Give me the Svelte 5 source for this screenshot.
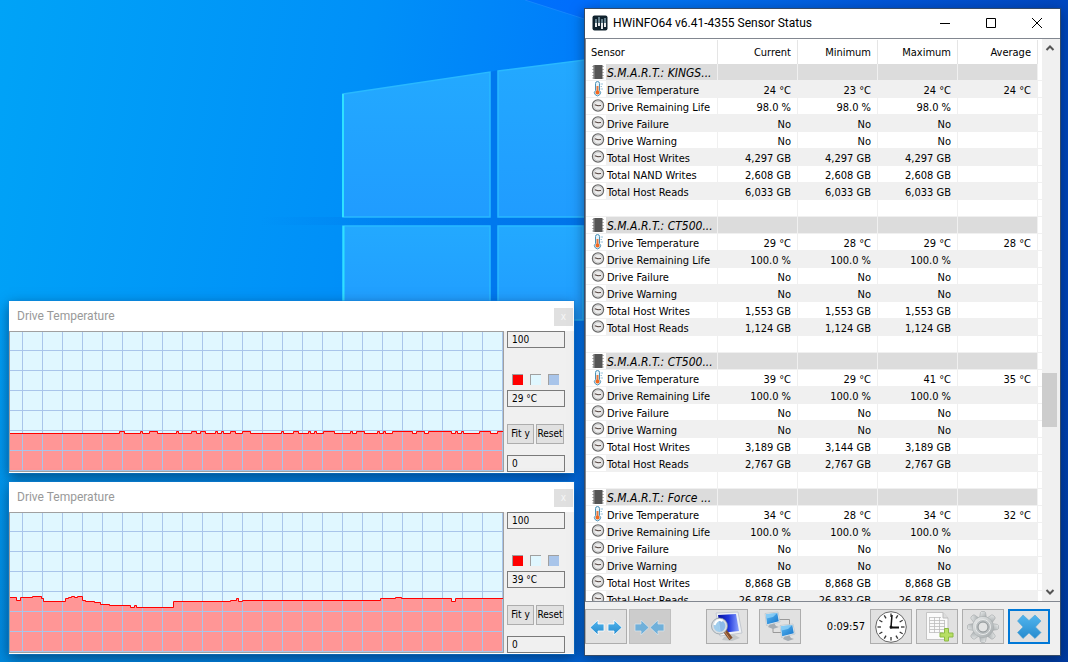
<script>
  const drive = (name, temps, life, writes, nand, reads) => [
    { kind: 'group', name, values: ['', '', '', ''] },
    { kind: 'temp', name: 'Drive Temperature', values: temps.map((t) => `${t} °C`) },
    { kind: 'gauge', name: 'Drive Remaining Life', values: [life, life, life, ''] },
    { kind: 'gauge', name: 'Drive Failure', values: ['No', 'No', 'No', ''] },
    { kind: 'gauge', name: 'Drive Warning', values: ['No', 'No', 'No', ''] },
    { kind: 'gauge', name: 'Total Host Writes', values: [...writes, ''] },
    ...(nand ? [{ kind: 'gauge', name: 'Total NAND Writes', values: [...nand, ''] }] : []),
    { kind: 'gauge', name: 'Total Host Reads', values: [...reads, ''] }
  ];
  const blank = { kind: 'blank', name: '', values: ['', '', '', ''] };
  const same = (v) => [v, v, v];

  const rows = [
    ...drive('S.M.A.R.T.: KINGS...', [24, 23, 24, 24], '98.0 %', same('4,297 GB'), same('2,608 GB'), same('6,033 GB')),
    blank,
    ...drive('S.M.A.R.T.: CT500...', [29, 28, 29, 28], '100.0 %', same('1,553 GB'), null, same('1,124 GB')),
    blank,
    ...drive('S.M.A.R.T.: CT500...', [39, 29, 41, 35], '100.0 %', ['3,189 GB', '3,144 GB', '3,189 GB'], null, same('2,767 GB')),
    blank,
    ...drive('S.M.A.R.T.: Force ...', [34, 28, 34, 32], '100.0 %', same('8,868 GB'), null, ['26,878 GB', '26,832 GB', '26,878 GB'])
  ];

  // Each step is [x where the level begins, y of the level] inside the plot.
  const bumps = [
    [110, 115], [131, 133], [140, 148], [167, 169], [182, 187], [191, 196], [206, 208], [212, 214],
    [221, 226], [233, 241], [272, 274], [284, 289], [299, 301], [305, 307], [314, 325], [341, 343],
    [347, 355], [368, 370], [374, 376], [383, 403], [407, 415], [419, 442], [446, 448], [452, 454],
    [470, 481], [488, 495]
  ];
  const flat = [[0, 102], ...bumps.flatMap(([a, b]) => [[a, 100], [b, 102]])];
  const wavy = [
    [0, 85], [7, 88], [11, 85], [23, 84], [32, 86], [34, 89], [56, 86], [59, 85], [62, 84], [65, 85],
    [68, 84], [73, 88], [76, 89], [85, 90], [91, 92], [100, 93], [121, 95], [125, 93], [127, 95],
    [164, 89], [221, 88], [227, 86], [229, 89], [233, 88], [371, 86], [386, 85], [392, 86],
    [442, 89], [446, 86]
  ];
  const trace = (steps) => {
    let d = `M${steps[0][0]} ${steps[0][1]}`;
    for (const [x, y] of steps.slice(1)) d += `H${x}V${y}`;
    return d + 'H494';
  };
  const graphs = [
    { id: 'upper', value: '29 °C', path: trace(flat) },
    { id: 'lower', value: '39 °C', path: trace(wavy) }
  ];

  const ticks = Array.from({ length: 12 }, (_, i) => i * 30);
  const teeth = Array.from({ length: 8 }, (_, i) => i * 45);
</script>

{#snippet rowIcon(kind)}
  {#if kind === 'group'}
    <svg class="ri" viewBox="0 0 14 16" aria-hidden="true">
      <path d="M1 2.5H13M1 5.5H13M1 8.5H13M1 11.5H13M1 14H13" stroke="#bbb" />
      <rect x="2.500" y="1" width="9" height="14" fill="#555" /><path d="M3.500 1V15" stroke="#777" />
    </svg>
  {:else if kind === 'temp'}
    <svg class="ri" viewBox="0 0 14 16" aria-hidden="true">
      <path d="M4.500 9.500V2.500Q4.500 .5 6.500 .5T8.500 2.500V9.500A3 3 0 1 1 4.500 9.500Z" fill="#e5f3fa" stroke="#4b91b7" />
      <path d="M6.500 5V12" stroke="#e8793f" stroke-width="2" /><circle cx="6.500" cy="11.500" r="2" fill="#f26a21" />
      <path d="M9.500 3H12M9.500 5.500H11M9.500 8H12" stroke="#9bc5dc" />
    </svg>
  {:else if kind === 'gauge'}
    <svg class="ri" viewBox="0 0 14 16" aria-hidden="true">
      <circle cx="7" cy="7.500" r="5.600" fill="#ececec" stroke="#6b6b6b" stroke-width="1.200" />
      <circle cx="7" cy="7.500" r="4.300" fill="none" stroke="#cacaca" />
      <path d="M3.800 6.700L7 7.800L10 7.500" fill="none" stroke="#53423d" stroke-width="1.100" />
    </svg>
  {/if}
{/snippet}

{#snippet monitor(x, y)}
  <g transform="translate({x} {y})">
    <path d="M6 12L10 11L12 14L15 15L9 17L4 15Z" fill="#a4acb3" />
    <path d="M1 1.500L14 0L16 10L2.500 13.500Z" fill="#e8eef2" stroke="#a9b3ba" stroke-width=".5" />
    <path d="M1.800 2.300L13.300 1L14.800 9.300L3.200 12.300Z" fill="url(#screen)" />
    <path d="M1.800 2.300L13.300 1L9 5L2.500 6.500Z" fill="#9cd8fa" opacity=".7" />
  </g>
{/snippet}

<main class="desktop">
  <svg class="wallpaper" aria-hidden="true">
    <defs>
      <linearGradient id="pane" x1="0" y1="0" x2="0" y2="1">
        <stop offset="0" stop-color="#23a9ff" /><stop offset="1" stop-color="#209cff" />
      </linearGradient>
      <linearGradient id="gap" x1="0" x2="1"><stop offset="0" stop-color="#0074e8" stop-opacity="0" /><stop offset="1" stop-color="#0074e8" /></linearGradient>
      <linearGradient id="screen" x1="0" y1="0" x2="1" y2="1"><stop offset="0" stop-color="#5dbcf6" /><stop offset="1" stop-color="#1673c8" /></linearGradient>
      <linearGradient id="blue" x1="0" y1="0" x2="0" y2="1"><stop offset="0" stop-color="#51b5ee" /><stop offset="1" stop-color="#268bce" /></linearGradient>
      <linearGradient id="deep" x1="0" y1="0" x2="1" y2="0"><stop offset="0" stop-color="#0510a0" /><stop offset=".5" stop-color="#2038dc" /><stop offset="1" stop-color="#8ba2ff" /></linearGradient>
      <linearGradient id="steel" x1="0" y1="0" x2="1" y2="1"><stop offset="0" stop-color="#eceeee" /><stop offset="1" stop-color="#a3a9ab" /></linearGradient>
    </defs>
    <path d="M525 0L600 24V0Z" fill="#0050ff" opacity=".35" />
    <path d="M525 0L600 24" stroke="#2492ff" opacity=".6" />
    <rect x="260" y="217" width="330" height="8" fill="url(#gap)" />
    <path d="M490 72V310H498V70Z" fill="#0078ee" />
    <g fill="url(#pane)" stroke="#29b9ff" stroke-width="1.500">
      <path d="M343 94L490 72V217H343Z" /><path d="M498 71L600 58V217H498Z" />
      <path d="M343 226H490V320H343Z" /><path d="M498 226H583V320H498Z" />
    </g>
    <path d="M343 94V217M343.500 226V320" stroke="#2fe1ff" stroke-width="2" />
  </svg>

  {#each graphs as g}
    <section class="graph {g.id}">
      <header>
        <h2>Drive Temperature</h2>
        <button class="gx" aria-label="Close graph">x</button>
      </header>
      <div class="gbody">
        <div class="plot">
          <svg width="100%" height="100%" role="img" aria-label="Drive temperature history">
            <defs>
              <pattern id="grid-{g.id}" x="12" y="18" width="20" height="20" patternUnits="userSpaceOnUse">
                <path d="M.5 0V20M0 .5H20" stroke="#a9c5ea" />
              </pattern>
            </defs>
            <g transform="translate(0 -1)">
              <path d="{g.path}V142H0Z" fill="#ff9696" />
            </g>
            <rect width="100%" height="100%" fill="url(#grid-{g.id})" />
            <path d={g.path} transform="translate(-.5 -.5)" fill="none" stroke="#f00" />
          </svg>
        </div>
        <div class="side">
          <input class="field" aria-label="Maximum" value="100" />
          <div class="swatches">
            <button style:background="#f00" aria-label="Line colour"></button>
            <button style:background="#e0f7ff" aria-label="Background colour"></button>
            <button style:background="#a9c5ea" aria-label="Grid colour"></button>
          </div>
          <input class="field" aria-label="Current value" value={g.value} readonly />
          <div class="acts"><button>Fit y</button><button>Reset</button></div>
          <input class="field" aria-label="Minimum" value="0" />
        </div>
      </div>
    </section>
  {/each}

  <section class="sensors">
    <header class="title">
      <svg width="16" height="16" viewBox="0 0 16 16" aria-hidden="true">
        <rect x=".5" y=".5" width="15" height="15" rx="2" fill="#10222e" /><path d="M1 2Q1 1 2 1H14Q15 1 15 2V8H1Z" fill="#3a83a5" />
        <path class="thin" d="M4 4V8M7 2V8M10 4V8M13 3V8" stroke="#b7dcea" />
        <path d="M4 8V12M7 8V11M10 8V14M13 8V12" stroke="#fff" stroke-width="1.800" />
      </svg>
      <h1>HWiNFO64 v6.41-4355 Sensor Status</h1>
      <button aria-label="Minimize"><svg width="12" height="12"><path d="M1 6.500H11" /></svg></button>
      <button aria-label="Maximize"><svg width="12" height="12"><path d="M1.500 1.500H10.500V10.500H1.500Z" /></svg></button>
      <button aria-label="Close"><svg width="12" height="12"><path d="M1 1L11 11M11 1L1 11" /></svg></button>
    </header>

    <div class="list">
      <div class="view">
        <table>
          <colgroup><col class="cn" /><col class="cv" /><col class="cv" /><col class="cv" /><col class="cv" /><col /></colgroup>
          <thead>
            <tr><th scope="col">Sensor</th><th scope="col">Current</th><th scope="col">Minimum</th><th scope="col">Maximum</th><th scope="col">Average</th><td></td></tr>
          </thead>
          <tbody>
            {#each rows as r, i}
              <tr class={r.kind} class:odd={i % 2 === 1}>
                <td class="name"><div><span class="ic">{@render rowIcon(r.kind)}</span><span class="label">{r.name}</span></div></td>
                {#each r.values as v}<td>{v}</td>{/each}
                <td class="end"></td>
              </tr>
            {/each}
          </tbody>
        </table>
      </div>
      <div class="scroll">
        <button aria-label="Scroll up"><svg width="10" height="8"><path d="M1.500 6L5 2.500L8.500 6" /></svg></button>
        <div class="track"><div class="thumb"></div></div>
        <button aria-label="Scroll down"><svg width="10" height="8"><path d="M1.500 2L5 5.500L8.500 2" /></svg></button>
      </div>
    </div>

    <footer>
      <div class="set">
        <button aria-label="Expand columns">
          <svg viewBox="0 0 40 33"><g fill="url(#blue)" stroke="#fff" stroke-width=".8"><path d="M4 17.500L12 10V14H18V21H12V25Z" /><path d="M36 17.500L28 10V14H22V21H28V25Z" /></g></svg>
        </button>
        <button aria-label="Shrink columns" disabled>
          <svg viewBox="0 0 40 33"><g fill="#70b0da" stroke="#d8e2e8" stroke-width=".8"><path d="M19 17.500L11 10V14H5V21H11V25Z" /><path d="M20 17.500L28 10V14H34V21H28V25Z" /></g></svg>
        </button>
      </div>
      <div class="set pair">
        <button aria-label="System summary">
          <svg viewBox="0 0 40 33">
            <path d="M17 27L26 24L33 28L25 31L15 30Z" fill="#c3c7c9" />
            <path d="M9 3L31 2L35 23L13 26Z" fill="#eef1f5" stroke="#c3c8d0" /><path d="M11 5L29 4L32 21L14 23Z" fill="url(#deep)" />
            <path d="M18 21L24 29" stroke="#83502f" stroke-width="4" /><path d="M18 22L23 29" stroke="#c88a58" />
            <circle cx="12.500" cy="16" r="7" fill="#9acbed" fill-opacity=".9" stroke="#d9dee2" stroke-width="2.200" /><circle cx="12.500" cy="16" r="8" fill="none" stroke="#788691" stroke-width=".6" />
            <path d="M7.500 15Q10 8 15.500 11" fill="none" stroke="#fff" stroke-width="2" />
          </svg>
        </button>
        <button aria-label="Remote sensors">
          <svg viewBox="0 0 40 33"><path d="M19 9.500H29.500V15M13 18V22.500H21" fill="none" stroke="#999" />{@render monitor(4, 2)}{@render monitor(19, 14)}</svg>
        </button>
      </div>
      <time>0:09:57</time>
      <div class="set tools">
        <button aria-label="Reset clock">
          <svg viewBox="0 0 40 33">
            <circle cx="20" cy="17" r="15.300" fill="#fff" stroke="#555" stroke-width=".9" />
            <g stroke="#333" stroke-width="1.300">{#each ticks as a}<path d="M20 3.500V7" transform="rotate({a} 20 17)" />{/each}</g>
            <path d="M20 17L21 5" stroke="#111" stroke-width="1.500" /><path d="M19 17.500H28" stroke="#111" stroke-width="2" /><circle cx="20" cy="17" r="1.500" fill="#111" />
          </svg>
        </button>
        <button aria-label="Start logging">
          <svg viewBox="0 0 40 33">
            <path d="M9.500 2.500H26L31 8V29.500H9.500Z" fill="#fafafa" stroke="#c5c5c5" /><path d="M26 2.500V8H31" fill="#ddd" stroke="#bbb" />
            <path d="M12.500 7.500H24M12.500 10.500H28M12.500 13.500H28M12.500 16.500H28M12.500 19.500H28M12.500 22.500H26M12.500 7V23M17.500 7V23M22.500 7V23M27.500 10V23" stroke="#bdbdbd" stroke-width=".8" />
            <path d="M27.500 18.500H31.500V23H36V27H31.500V31H27.500V27H23V23H27.500Z" fill="#b7df64" stroke="#8cba45" />
          </svg>
        </button>
        <button aria-label="Configure sensors">
          <svg viewBox="0 0 40 33">
            <g fill="url(#steel)" stroke="#a4a9ab" stroke-width=".6">{#each teeth as a}<path d="M16.500 8L17.500 2.500L18.500 1.500H21.500L22.500 2.500L23.500 8Z" transform="rotate({a} 20 17)" />{/each}<circle cx="20" cy="17" r="10.500" /></g>
            <circle cx="20" cy="17" r="10" fill="url(#steel)" />
            <circle cx="20" cy="17" r="7.500" fill="#b9bec0" stroke="#e8eaea" /><circle cx="20" cy="17" r="5" fill="#e3e4e4" stroke="#8d9395" />
          </svg>
        </button>
        <button class="exit" aria-label="Close sensors">
          <svg viewBox="0 0 40 33"><path d="M14 5L20 10.500L26 5L32 11L26.500 17L32 22.500L26 28.500L20 23L14 28.500L8.500 22.500L14 17L8.500 11Z" fill="url(#blue)" stroke="#4fa3d4" stroke-width=".6" /></svg>
        </button>
      </div>
    </footer>
  </section>
</main>

<style>
  :global(body) { margin: 0; }
  * { box-sizing: border-box; }
  .desktop {
    position: relative; min-height: 100vh; overflow: hidden;
    font: 11px/16px "DejaVu Sans Condensed", "DejaVu Sans", sans-serif; color: #000;
    background:
      linear-gradient(to bottom, transparent 45%, #00306830 100%),
      linear-gradient(100deg, #00a3f7 0%, #0090f8 32%, #007dfa 50%, #0056d8 75%, #003eb0 100%);
  }
  .wallpaper { position: absolute; inset: 0; width: 100%; height: 100%; }
  button { font: inherit; color: inherit; padding: 0; margin: 0; border: 0; background: none; display: flex; align-items: center; justify-content: center; }
  h1, h2 { margin: 0; font: 12px/16px Roboto, "Open Sans", sans-serif; }

  .graph { position: absolute; left: 9px; width: 565px; background: #fff; box-shadow: 0 0 0 1px #1683d866, 0 4px 12px #00204099; padding-bottom: 1px; }
  .upper { top: 301px; }
  .lower { top: 482px; }
  .graph header { height: 30px; display: flex; align-items: center; justify-content: space-between; padding: 0 1px 0 8px; }
  .graph h2 { color: #999; }
  .gx { width: 19px; height: 18px; margin-top: 2px; background: #e0e0e0; color: #f6f6f6; font-size: 10px; }
  .gbody { display: flex; height: 141px; background: #f0f0f0; }
  .plot { flex: 1; border: 1px solid #a0a0a0; background: #e0f7ff; }
  .plot svg { display: block; }
  .side { width: 70px; padding-left: 3px; display: flex; flex-direction: column; }
  .field { width: 58px; height: 17px; border: 1px solid #7a7a7a; border-radius: 0; padding: 0 4px; margin: 0; background: #f0f0f0; font: inherit; font-size: 10px; color: #000; }
  .swatches { display: flex; gap: 7px; padding: 0 5px; margin: 26px 0 5px; }
  .swatches button { width: 11px; height: 11px; border: 1px solid #a0a0a0; border-width: 1px 0 0 1px; }
  .acts { display: flex; gap: 2px; margin: 17px 0 11px; }
  .acts button { width: 27px; height: 20px; border: 1px solid #adadad; background: #e1e1e1; font-size: 10px; }
  .acts button + button { width: 28px; }

  .sensors { position: absolute; left: 584px; right: 7px; top: 8px; bottom: 6px; display: flex; flex-direction: column; background: #f0f0f0; border: 1px solid #354b68; box-shadow: 0 3px 12px #00183888; }
  .title { height: 29px; flex: none; display: flex; align-items: center; background: #fff; padding: 0 0 2px 7px; }
  .title h1 { flex: 1; margin-left: 5px; }
  .title button { width: 46px; height: 27px; }
  .title path { fill: none; }
  .title button path { stroke: #000; }
  .list { flex: 1; min-height: 0; display: flex; background: #fff; border: 1px solid #828790; border-right: 0; }
  .view { flex: 1; min-width: 0; overflow: hidden; padding-top: 1px; }
  table { width: 100%; table-layout: fixed; border-collapse: separate; border-spacing: 0; }
  .cn { width: 132px; }
  .cv { width: 80px; }
  th { height: 24px; font-weight: normal; text-align: right; padding: 1px 6px 0 0; border-right: 1px solid #e5e5e5; }
  th:first-child { text-align: left; padding-left: 5px; }
  thead td { padding: 0; }
  tbody td { height: 17px; line-height: 12px; padding: 4px 6px 0 0; text-align: right; white-space: nowrap; border-right: 1px solid #f0f0f0; border-bottom: 1px solid #f0f0f0; }
  tbody td.name { padding: 0; text-align: left; }
  tbody td.end { padding: 0; border-right: 0; }
  .name div { display: flex; height: 16px; }
  .ic { width: 20px; padding-left: 5px; background: #fff; flex: none; }
  .ri { display: block; width: 14px; height: 16px; }
  .label { flex: 1; padding: 4px 0 0 1px; }
  .odd td:not(.name):not(.end), .odd .label { background: #f0f0f0; }
  .group td:not(.name):not(.end), .group .label { background: #dcdcdc; }
  .group .label { font-style: italic; font-size: 12px; padding-top: 3px; }
  .scroll { width: 18px; flex: none; display: flex; flex-direction: column; background: #f0f0f0; }
  .scroll button { width: 16px; height: 18px; }
  .scroll path { fill: none; stroke: #555; stroke-width: 2; }
  .track { flex: 1; padding-top: 316px; }
  .thumb { width: 15px; height: 54px; background: #cdcdcd; }

  footer { flex: none; display: flex; align-items: center; padding: 7px 10px 11px 0; }
  .set { display: flex; gap: 2px; }
  .pair { gap: 11px; margin-left: 35px; }
  .tools { gap: 4px; margin-left: 5px; }
  time { margin-left: auto; }
  footer button { width: 42px; height: 35px; border: 1px solid #adadad; background: #e1e1e1; }
  footer button:disabled { background: #ccc; border-color: #bfbfbf; }
  footer svg { width: 40px; height: 33px; flex: none; }
  .exit { border: 2px solid #0078d7; }
</style>
